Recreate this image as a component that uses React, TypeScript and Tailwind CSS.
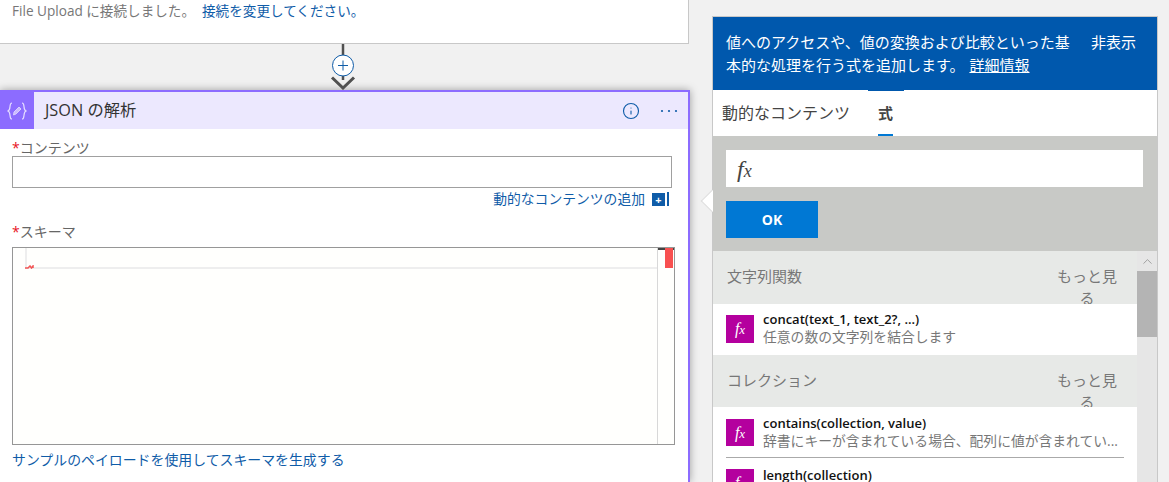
import React from 'react'
import { Info, ChevronUp } from 'lucide-react'

const font = 'font-["Open_Sans","Noto_Sans_CJK_JP",sans-serif]'

const FxBadge: React.FC<{ height: string }> = ({ height }) => (
  <div className={`w-[28px] ${height} bg-[#b4009e] shrink-0 flex items-center justify-center text-white text-[16px] italic font-["Liberation_Serif",serif]`}>
    <span>f<span className="text-[13px]">x</span></span>
  </div>
)

const SectionHeader: React.FC<{ title: string; height: string }> = ({ title, height }) => (
  <div className={`${height} bg-[#e7e9e7] flex justify-between overflow-hidden pl-[14px] pr-[20px] text-[#777] text-[15px] leading-[22px]`}>
    <span className="pt-[14px]">{title}</span>
    <span className="w-[60px] pt-[14px] text-center">もっと見る</span>
  </div>
)

const Connector: React.FC = () => (
  <div className="h-[46px] w-[686px] flex justify-center">
    <svg width="30" height="46" viewBox="0 0 30 46" fill="none">
      <path d="M15 0V36" stroke="#505050" strokeWidth="2.5" />
      <path d="M4 33.500L15 44L26 33.500" stroke="#505050" strokeWidth="3" />
      <circle cx="15" cy="21.500" r="10.500" fill="#fff" stroke="#0f5ca8" strokeWidth="1" />
      <path d="M15 16.500V26.500M10 21.500H20" stroke="#0f5ca8" strokeWidth="1" />
    </svg>
  </div>
)

const JsonCard: React.FC = () => (
  <div className="h-[392px] w-[690px] bg-white border-t-2 border-r-2 border-[#8c6cff] shadow-[0_0_8px_rgba(0,0,0,0.35)]">
    <div className="h-[37px] flex items-center bg-[#ece8fe]">
      <div className="w-[34px] h-[37px] bg-[#8c6cff] flex items-center justify-center">
        <svg width="20" height="18" viewBox="0 0 20 18" fill="none" stroke="#e4dcff" strokeWidth="1.2">
          <path d="M5 1C1.500 1 4.500 8 1 9C4.500 10 1.500 17 5 17" />
          <path d="M15 1C18.500 1 15.500 8 19 9C15.500 10 18.500 17 15 17" />
          <path d="M6.500 13L7 10L12 5L14 7L9 12Z" fill="#c9b9ff" strokeWidth="0.8" />
        </svg>
      </div>
      <span className="ml-[11px] text-[16.3px] text-[#333]">JSON の解析</span>
      <div className="ml-auto flex items-center">
        <Info size={18} strokeWidth={1.5} className="text-[#0f5ca8]" />
        <svg width="18" height="4" viewBox="0 0 18 4" fill="#0f5ca8" className="ml-[20px] mr-[10px]">
          <circle cx="2" cy="2" r="1.100" />
          <circle cx="9" cy="2" r="1.100" />
          <circle cx="16" cy="2" r="1.100" />
        </svg>
      </div>
    </div>

    <div className="pl-[12px]">
      <div className="h-[27px] pt-[9px] text-[14px] leading-[20px] text-[#666]">
        <span className="text-[#e81123]">*</span>コンテンツ
      </div>
      <div className="w-[660px] h-[32px] border border-[#a0a0a0] bg-white" />
      <div className="w-[657px] h-[22px] flex items-center justify-end text-[13.8px] text-[#0f5ca8]">
        <span>動的なコンテンツの追加</span>
        <span className="ml-[7px] w-[13px] h-[13px] bg-[#0f5ca8] text-white text-[11px] leading-[13px] font-bold text-center">+</span>
        <span className="ml-[2px] w-[2px] h-[14px] bg-[#0f5ca8]" />
      </div>
      <div className="h-[37px] pt-[12px] text-[14px] leading-[20px] text-[#666]">
        <span className="text-[#e81123]">*</span>スキーマ
      </div>

      <div className="relative w-[663px] h-[198px] border border-[#969696] bg-[#fffffd]">
        <div className="absolute left-[12px] top-0 h-[20px] w-[2px] bg-[#eee]" />
        <div className="absolute left-[12px] top-[19px] right-[16px] h-[2px] bg-[#eee]" />
        <svg width="9" height="4" viewBox="0 0 9 4" fill="none" stroke="#f25555" strokeWidth="1.500" className="absolute left-[12px] top-[17px]">
          <path d="M0 3H3L5 1L6.500 3L8 1V3" />
        </svg>
        <div className="absolute right-[16px] top-0 bottom-0 w-px bg-[#d8d8d8]" />
        <div className="absolute right-0 top-0 w-[16px] h-[2px] bg-[#444]" />
        <div className="absolute right-[1px] top-0 w-[8px] h-[20px] bg-[#f85050]" />
      </div>
      <div className="mt-[5px] text-[13.9px] leading-[20px] text-[#0f5ca8]">サンプルのペイロードを使用してスキーマを生成する</div>
    </div>
  </div>
)

const ExpressionPanel: React.FC = () => (
  <div className="relative mt-[16px] ml-[22px] w-[446px] h-[466px] border-x border-t border-[#c8c8c8] bg-white">
    <div className="absolute left-[-9px] top-[176px] w-[16px] h-[16px] rotate-45 bg-white border-l border-b border-[#dcdcdc]" />

    <div className="relative h-[73px] bg-[#0058ad] text-white text-[15px] leading-[23px] flex justify-between pl-[13px] pr-[21px] pt-[14px]">
      <span>
        値へのアクセスや、値の変換および比較といった基<br />
        本的な処理を行う式を追加します。 <span className="ml-[1px] underline">詳細情報</span>
      </span>
      <span>非表示</span>
      <div className="absolute left-[155px] bottom-[-1px] w-[36px] h-px bg-[#0058ad]" />
    </div>

    <div className="h-[46px] flex items-center">
      <span className="ml-[9px] text-[16px] text-[#444]">動的なコンテンツ</span>
      <span className="ml-[28px] h-[46px] border-b-2 border-[#0078d4] pt-[12px] text-[15px] leading-[22px] font-bold text-[#444]">式</span>
    </div>

    <div className="relative h-[115px] bg-[#c8c9c6] pl-[13px] pr-[14px] pt-[14px]">
      <div className="h-[37px] bg-white pl-[11px] flex items-center text-[#444] text-[24px] italic font-['Liberation_Serif',serif]">
        <span>f<span className="text-[18px]">x</span></span>
      </div>
      <button className="mt-[14px] w-[92px] h-[37px] bg-[#0078d4] text-white text-[14px] font-bold">OK</button>
    </div>

    <div className="flex h-[231px]">
      <div className="w-[424px] overflow-hidden">
        <SectionHeader title="文字列関数" height="h-[53px]" />
        <div className="h-[51px] bg-white flex pl-[13px] pt-[11px]">
          <FxBadge height="h-[28px]" />
          <div className="ml-[9px] -mt-[4px] text-[13px] leading-[17px]">
            <div className="font-semibold text-[#111]">concat(text_1, text_2?, ...)</div>
            <div className="text-[13.8px] text-[#777]">任意の数の文字列を結合します</div>
          </div>
        </div>
        <SectionHeader title="コレクション" height="h-[52px]" />
        <div className="mx-[13px] h-[51px] flex pt-[12px] border-b border-[#aaa]">
          <FxBadge height="h-[27px]" />
          <div className="ml-[9px] -mt-[4px] min-w-0 text-[13px] leading-[17px]">
            <div className="font-semibold text-[#111]">contains(collection, value)</div>
            <div className="w-[358px] whitespace-nowrap overflow-hidden text-[13.8px] text-[#777]">辞書にキーが含まれている場合、配列に値が含まれてい...</div>
          </div>
        </div>
        <div className="flex pl-[13px] pt-[11px]">
          <FxBadge height="h-[28px]" />
          <div className="ml-[9px] -mt-[2px] text-[13px] leading-[17px] font-semibold text-[#111]">length(collection)</div>
        </div>
      </div>

      <div className="w-[20px] bg-[#e6e6e6]">
        <div className="h-[20px] flex items-center justify-center">
          <ChevronUp size={15} strokeWidth={1} className="text-[#777]" />
        </div>
        <div className="h-[66px] bg-[#b4b4b4]" />
      </div>
    </div>
  </div>
)

export default function App() {
  return (
    <div className={`w-[1169px] h-[482px] overflow-hidden flex bg-[#f1f1f1] ${font}`}>
      <div className="w-[690px] shrink-0">
        <div className="w-[689px] h-[44px] bg-white border-r border-b border-[#c8c8c8] pl-[12px] text-[13.6px] leading-[22px] text-[#777]">
          File Upload に接続しました。
          <span className="ml-[7px] text-[#0f5ca8]">接続を変更してください。</span>
        </div>
        <Connector />
        <JsonCard />
      </div>
      <ExpressionPanel />
    </div>
  )
}
